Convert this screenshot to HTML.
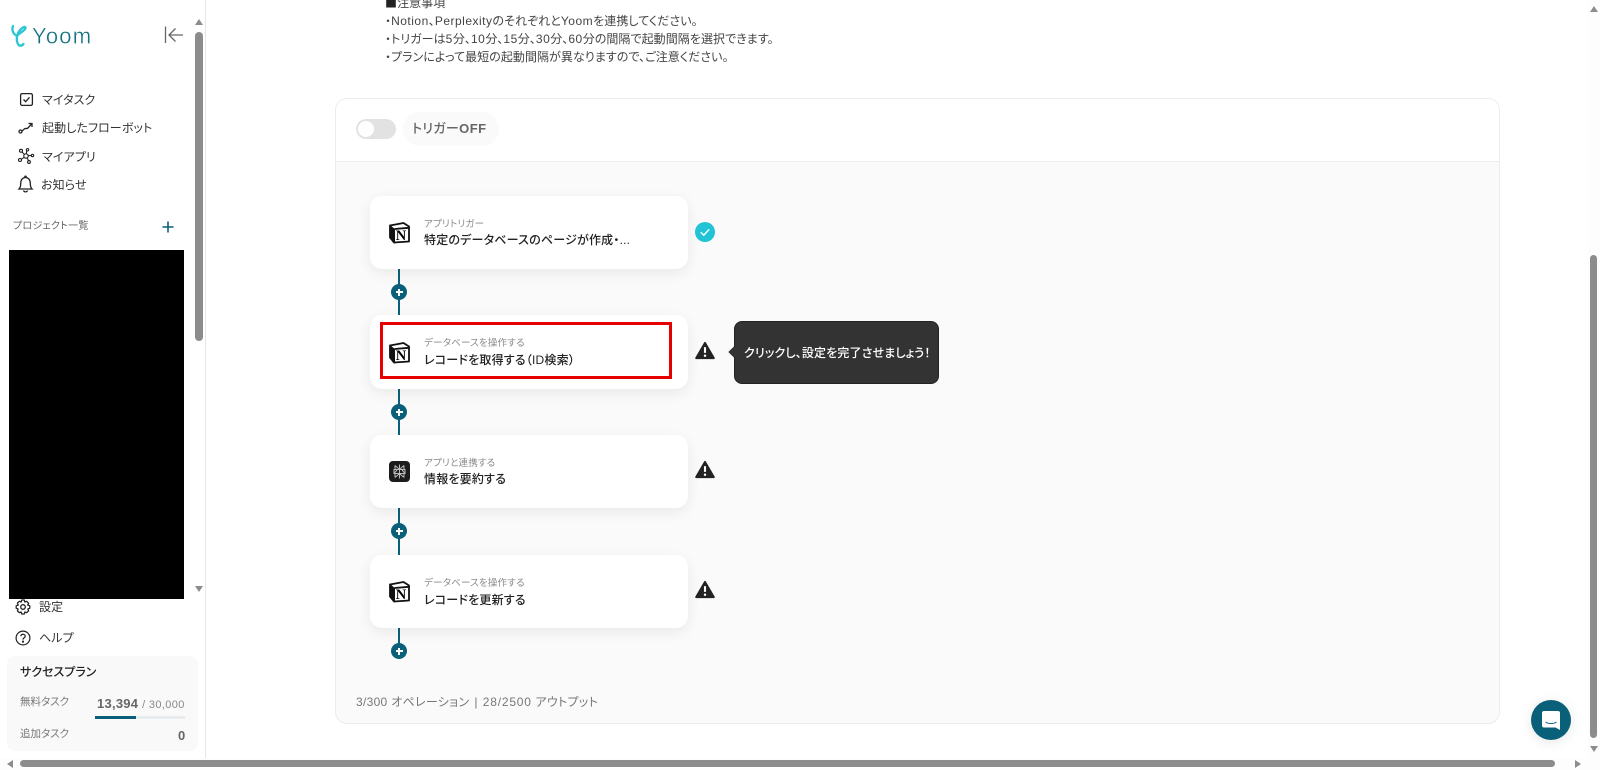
<!DOCTYPE html>
<html lang="ja"><head><meta charset="utf-8"><title>Yoom</title>
<style>
*{box-sizing:border-box}
html,body{margin:0;padding:0;width:1600px;height:770px;overflow:hidden;background:#fff}
body{position:relative;font-family:"Liberation Sans","Noto Sans CJK JP",sans-serif;color:#222;font-feature-settings:"palt";-webkit-font-smoothing:antialiased}
.a{position:absolute;white-space:nowrap}
.nav{font-size:12px;line-height:18px;color:#333;letter-spacing:.1px}
.note{left:385px;font-size:12px;line-height:18px;color:#444;letter-spacing:.05px}
.note b{font-weight:400;letter-spacing:.5px}
.card{position:absolute;left:370px;width:318px;height:73px;background:#fff;border-radius:12px;box-shadow:0 4px 14px rgba(0,0,0,.07)}
.sub{position:absolute;left:54px;top:22px;font-size:9.5px;line-height:14px;color:#8a8a8a;white-space:nowrap;letter-spacing:.2px}
.ttl{position:absolute;left:54px;top:34px;font-size:12px;line-height:20px;font-weight:500;color:#222;white-space:nowrap;letter-spacing:.2px}
.line{position:absolute;left:398px;width:2px;background:#0b6079}
.plus{position:absolute;left:391px;width:16px;height:16px;border-radius:50%;background:#0b6079}
.plus:before{content:"";position:absolute;left:4.5px;top:7.25px;width:7px;height:1.5px;background:#fff}
.plus:after{content:"";position:absolute;left:7.25px;top:4.5px;width:1.5px;height:7px;background:#fff}
.sb{position:absolute;background:#8c8c8c;border-radius:4px}
svg{position:absolute;overflow:visible}
</style></head><body>

<!-- sidebar -->
<div class="a" style="left:205px;top:0;width:1px;height:758px;background:#e6e6e6"></div>
<svg style="left:0;top:0" width="30" height="50" fill="none"><path d="M13 26C11.500 30 13 34 17 36C19 33 25 31 25.500 28C25.500 26 23 27 21 29C17 33 15.500 39 18 44C19 46.500 22 46 23.500 44" stroke="#2cc5d2" stroke-width="2.300" stroke-linecap="round"/></svg>
<svg style="left:0;top:0" width="100" height="50"><text x="32" y="43.500" font-family="Liberation Sans" font-size="22" letter-spacing="1.200" fill="#15707f" stroke="#fff" stroke-width=".35">Yoom</text></svg>
<svg style="left:164px;top:25px" width="20" height="20" viewBox="0 0 20 20" fill="none" stroke="#666" stroke-width="1.3"><path d="M1.5 1.5V18M19 10H5M11.5 3.5L5 10L11.5 16.5"/></svg>

<svg style="left:20px;top:93px" width="13" height="13" viewBox="0 0 13 13" fill="none" stroke="#222" stroke-width="1.3"><rect x=".6" y=".6" width="11.8" height="11.8" rx="1.5"/><path d="M3.500 6.500L5.700 8.700L9.500 4.300"/></svg>
<div class="a nav" style="left:42px;top:91px">マイタスク</div>
<svg style="left:18px;top:121px" width="16" height="14" viewBox="0 0 16 14" fill="none" stroke="#222" stroke-width="1.300"><circle cx="2.500" cy="10.500" r="1.500"/><path d="M4 10C6 9 6 7 8 7.500C10 8 10.500 6 13.500 3"/><path d="M10.500 2.500H14V6"/></svg>
<div class="a nav" style="left:42px;top:119px">起動したフローボット</div>
<svg style="left:18px;top:148px" width="16" height="16" viewBox="0 0 16 16" fill="none" stroke="#222" stroke-width="1.100"><circle cx="8" cy="8" r="2.200"/><circle cx="3" cy="2.800" r="1.500"/><circle cx="9.500" cy="1.800" r="1.200"/><circle cx="14.500" cy="7.500" r="1.200"/><circle cx="2" cy="12" r="1.500"/><circle cx="11" cy="14" r="1.400"/><path d="M4 4L6.500 6.500M8.700 3L8.300 5.800M13.300 7.600H10.200M3.400 11.200L6.200 9.300M10.600 12.700L9.200 10"/></svg>
<div class="a nav" style="left:42px;top:148px">マイアプリ</div>
<svg style="left:18px;top:175px" width="15" height="18" viewBox="0 0 15 18" fill="none" stroke="#222" stroke-width="1.300"><path d="M1 14H14C12.500 12.500 12.300 11 12.300 8.500C12.300 5 10.500 2.500 7.500 2.500C4.500 2.500 2.700 5 2.700 8.500C2.700 11 2.500 12.500 1 14Z"/><path d="M6.500 1.800C6.800 1 8.200 1 8.500 1.800M5.500 15.500C6 17.300 9 17.300 9.500 15.500"/></svg>
<div class="a nav" style="left:41px;top:176px">お知らせ</div>
<div class="a" style="left:13px;top:220px;font-size:10px;line-height:14px;color:#666;letter-spacing:.25px">プロジェクト一覧</div>
<svg style="left:162px;top:221px" width="12" height="12" fill="none" stroke="#0b6079" stroke-width="1.600"><path d="M6 .5V11.500M.5 6H11.500"/></svg>

<div class="a" style="left:9px;top:250px;width:175px;height:349px;background:#000"></div>
<div class="sb" style="left:195px;top:32px;width:8px;height:309px"></div>
<svg style="left:195px;top:19px" width="8" height="6"><path d="M0 6L4 0L8 6Z" fill="#8c8c8c"/></svg>
<svg style="left:195px;top:586px" width="8" height="6"><path d="M0 0L4 6L8 0Z" fill="#8c8c8c"/></svg>

<svg style="left:15px;top:599px" width="16" height="16" viewBox="0 0 16 16" fill="none" stroke="#222" stroke-width="1.300"><circle cx="8" cy="8" r="2.300"/><path d="M6.700 1H9.300L9.800 3L11.700 2.300L13.600 4.200L12.700 6L14.800 6.800V9.200L12.900 10L13.600 11.800L11.700 13.700L9.900 13L9.300 15H6.700L6.100 13L4.300 13.700L2.400 11.800L3.100 10L1.200 9.200V6.800L3.300 6L2.400 4.200L4.300 2.300L6.200 3Z" stroke-linejoin="round"/></svg>
<div class="a nav" style="left:39px;top:598px">設定</div>
<svg style="left:15px;top:630px" width="16" height="16" viewBox="0 0 16 16" fill="none" stroke="#222" stroke-width="1.200"><circle cx="8" cy="8" r="6.900"/><path d="M5.900 6.200C6 3.600 10.200 3.700 10.200 6.200C10.200 7.800 8 7.800 8 9.600"/><circle cx="8" cy="11.600" r=".5" fill="#222"/></svg>
<div class="a nav" style="left:39px;top:629px">ヘルプ</div>

<div class="a" style="left:7px;top:656px;width:191px;height:95px;background:#f9f9f9;border-radius:8px"></div>
<div class="a" style="left:20px;top:663px;font-size:12px;line-height:18px;font-weight:500;color:#222">サクセスプラン</div>
<div class="a" style="left:20px;top:695px;font-size:10.500px;line-height:14px;color:#777">無料タスク</div>
<div class="a" style="left:97px;top:696px;font-size:13px;line-height:16px;font-weight:700;color:#666;letter-spacing:.25px">13,394 <span style="font-weight:400;font-size:11px;color:#888;letter-spacing:.35px">/ 30,000</span></div>
<div class="a" style="left:95px;top:716px;width:90px;height:3px;background:#e8ecee"></div>
<div class="a" style="left:95px;top:716px;width:41px;height:3px;background:#0b6079"></div>
<div class="a" style="left:20px;top:727px;font-size:10.500px;line-height:14px;color:#777">追加タスク</div>
<div class="a" style="left:178px;top:728px;font-size:13px;line-height:16px;font-weight:700;color:#666">0</div>

<!-- notes -->
<div class="a note" style="left:385px;top:-6px"><span style="font-family:'Noto Sans CJK JP',sans-serif;color:#222">■</span>注意事項</div>
<div class="a note" style="top:12px">・<b>Notion</b>、<b>Perplexity</b>のそれぞれと<b>Yoom</b>を連携してください。</div>
<div class="a note" style="top:30px">・トリガーは<b>5</b>分、<b>10</b>分、<b>15</b>分、<b>30</b>分、<b>60</b>分の間隔で起動間隔を選択できます。</div>
<div class="a note" style="top:48px">・プランによって最短の起動間隔が異なりますので、ご注意ください。</div>

<!-- panel -->
<div class="a" style="left:335px;top:98px;width:1165px;height:626px;border:1px solid #ececec;border-radius:12px;background:#fafafa;overflow:hidden">
  <div style="position:absolute;left:0;top:0;right:0;height:63px;background:#fff;border-bottom:1px solid #eee"></div>
</div>
<div class="a" style="left:356px;top:119px;width:40px;height:20px;border-radius:10px;background:#e2e2e2"></div>
<div class="a" style="left:358px;top:121px;width:16px;height:16px;border-radius:50%;background:#fff"></div>
<div class="a" style="left:403px;top:112px;width:96px;height:34px;border-radius:17px;background:#fafafa"></div>
<div class="a" style="left:412px;top:119px;font-size:13px;line-height:20px;font-weight:500;color:#666;letter-spacing:.3px">トリガー<span style="font-weight:700;letter-spacing:.5px">OFF</span></div>

<!-- lines -->
<div class="line" style="top:269px;height:46px"></div>
<div class="line" style="top:389px;height:46px"></div>
<div class="line" style="top:508px;height:47px"></div>
<div class="line" style="top:628px;height:20px"></div>
<div class="plus" style="top:284px"></div>
<div class="plus" style="top:404px"></div>
<div class="plus" style="top:523px"></div>
<div class="plus" style="top:643px"></div>

<!-- cards -->
<div class="card" style="top:196px;height:73px"><div class="sub">アプリトリガー</div><div class="ttl">特定のデータベースのページが作成・...</div></div>
<div class="card" style="top:315px;height:74px"><div class="sub">データベースを操作する</div><div class="ttl" style="top:35px">レコードを取得する（ID検索）</div></div>
<div class="card" style="top:435px;height:73px"><div class="sub">アプリと連携する</div><div class="ttl">情報を要約する</div></div>
<div class="card" style="top:555px;height:73px"><div class="sub">データベースを操作する</div><div class="ttl" style="top:35px">レコードを更新する</div></div>

<svg style="left:389px;top:222px" width="21" height="21" viewBox="0 0 21 21"><path d="M1 3.500L14.500 1L20 4.500V19.500L5 20.500L1 15.500Z" fill="#fff" stroke="#111" stroke-width="1.800" stroke-linejoin="round"/><path d="M1 3.500L5.500 7.500V20.500L1 15.500Z" fill="#111" stroke="#111"/><path d="M5.500 7L20 5.800" fill="none" stroke="#111" stroke-width="1.800"/><text x="6.700" y="18" font-family="Liberation Serif" font-size="14.500" font-weight="700" fill="#000">N</text></svg>
<svg style="left:389px;top:342px" width="21" height="21" viewBox="0 0 21 21"><path d="M1 3.500L14.500 1L20 4.500V19.500L5 20.500L1 15.500Z" fill="#fff" stroke="#111" stroke-width="1.800" stroke-linejoin="round"/><path d="M1 3.500L5.500 7.500V20.500L1 15.500Z" fill="#111" stroke="#111"/><path d="M5.500 7L20 5.800" fill="none" stroke="#111" stroke-width="1.800"/><text x="6.700" y="18" font-family="Liberation Serif" font-size="14.500" font-weight="700" fill="#000">N</text></svg>
<svg style="left:389px;top:581px" width="21" height="21" viewBox="0 0 21 21"><path d="M1 3.500L14.500 1L20 4.500V19.500L5 20.500L1 15.500Z" fill="#fff" stroke="#111" stroke-width="1.800" stroke-linejoin="round"/><path d="M1 3.500L5.500 7.500V20.500L1 15.500Z" fill="#111" stroke="#111"/><path d="M5.500 7L20 5.800" fill="none" stroke="#111" stroke-width="1.800"/><text x="6.700" y="18" font-family="Liberation Serif" font-size="14.500" font-weight="700" fill="#000">N</text></svg>
<svg style="left:389px;top:461px" width="21" height="21" viewBox="0 0 21 21"><rect width="21" height="21" rx="4" fill="#1c1c1c"/><path d="M6 4.500L10.500 8.500L15 4.500M6 16.500L10.500 12.500L15 16.500M10.500 3.500V17.500M5 8.500H16V12.500H5ZM6 4.500V8.500M15 4.500V8.500M6 12.500V16.500M15 12.500V16.500M5 12.500L8 9M16 12.500L13 9" fill="none" stroke="#bdbdbd" stroke-width="1"/></svg>

<!-- status -->
<svg style="left:695px;top:222px" width="20" height="20" viewBox="0 0 20 20"><circle cx="10" cy="10" r="10" fill="#22c3d6"/><path d="M5.800 10.300L8.800 13.200L14.200 7.300" fill="none" stroke="#fff" stroke-width="1.400"/></svg>
<svg style="left:695px;top:341px" width="20" height="19" viewBox="0 0 21 19"><path d="M10.500 1.500L19.800 17.500H1.200Z" fill="#222" stroke="#222" stroke-width="2" stroke-linejoin="round"/><path d="M10.500 6V12" stroke="#fff" stroke-width="2.200"/><circle cx="10.500" cy="15" r="1.300" fill="#fff"/></svg>
<svg style="left:695px;top:460px" width="20" height="19" viewBox="0 0 21 19"><path d="M10.500 1.500L19.800 17.500H1.200Z" fill="#222" stroke="#222" stroke-width="2" stroke-linejoin="round"/><path d="M10.500 6V12" stroke="#fff" stroke-width="2.200"/><circle cx="10.500" cy="15" r="1.300" fill="#fff"/></svg>
<svg style="left:695px;top:580px" width="20" height="19" viewBox="0 0 21 19"><path d="M10.500 1.500L19.800 17.500H1.200Z" fill="#222" stroke="#222" stroke-width="2" stroke-linejoin="round"/><path d="M10.500 6V12" stroke="#fff" stroke-width="2.200"/><circle cx="10.500" cy="15" r="1.300" fill="#fff"/></svg>

<!-- red box -->
<div class="a" style="left:380px;top:322px;width:292px;height:57px;border:3px solid #e60000"></div>

<!-- tooltip -->
<div class="a" style="left:734px;top:321px;width:205px;height:63px;background:#333;border:1px solid #222;border-radius:8px"></div>
<div class="a" style="left:730px;top:348px;width:8px;height:8px;background:#333;transform:rotate(45deg)"></div>
<div class="a" style="left:744px;top:344px;font-size:12px;line-height:18px;font-weight:500;color:#fff;letter-spacing:.15px">クリックし、設定を完了させましょう！</div>

<!-- footer text -->
<div class="a" style="left:356px;top:693px;font-size:12px;line-height:18px;color:#777;letter-spacing:.3px">3/300 オペレーション<span style="margin:0 5px 0 5px">|</span><span style="letter-spacing:.8px">28/2500</span> アウトプット</div>

<!-- chat -->
<div class="a" style="left:1531px;top:700px;width:40px;height:40px;border-radius:50%;background:#0b6079;box-shadow:0 2px 12px rgba(0,0,0,.1)"></div>
<svg style="left:1541px;top:710px" width="20" height="21" viewBox="0 0 20 21"><path d="M3 1H17C18.200 1 19 1.800 19 3V20L14.500 17.500H3C1.800 17.500 1 16.700 1 15.500V3C1 1.800 1.800 1 3 1Z" fill="#fff"/><path d="M4.500 12C7.500 14 12.500 14 15.500 12" fill="none" stroke="#0b6079" stroke-width="1"/></svg>

<!-- main scrollbars -->
<div class="a" style="left:1588px;top:0;width:12px;height:770px;background:#fdfdfd"></div>
<svg style="left:1590px;top:6px" width="8" height="6"><path d="M0 6L4 0L8 6Z" fill="#8c8c8c"/></svg>
<div class="sb" style="left:1590px;top:255px;width:7px;height:483px"></div>
<svg style="left:1590px;top:746px" width="8" height="6"><path d="M0 0L4 6L8 0Z" fill="#8c8c8c"/></svg>
<div class="a" style="left:0;top:758px;width:1600px;height:12px;background:#fdfdfd"></div>
<div class="sb" style="left:20px;top:760px;width:1535px;height:7px"></div>
<svg style="left:7px;top:760px" width="6" height="8"><path d="M6 0L0 4L6 8Z" fill="#8c8c8c"/></svg>
<svg style="left:1575px;top:760px" width="6" height="8"><path d="M0 0L6 4L0 8Z" fill="#8c8c8c"/></svg>
</body></html>
